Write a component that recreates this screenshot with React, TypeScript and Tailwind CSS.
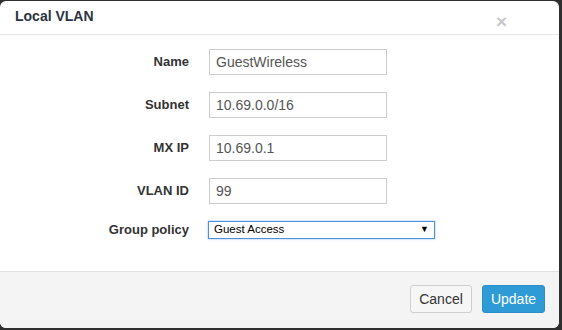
import React from "react";

const font = { fontFamily: '"Liberation Sans", Arial, sans-serif' };

function Row({ label, value }: { label: string; value: string }) {
  return (
    <div className="flex items-center h-[26px]">
      <div className="w-[189px] text-right text-[13px] font-bold text-[#333]">{label}</div>
      <div className="ml-[20px] w-[178px] h-[26px] border border-[#cccccc] bg-white flex items-center px-[6px] text-[14px] text-[#555]">
        {value}
      </div>
    </div>
  );
}

export default function App() {
  return (
    <div className="w-[562px] h-[330px] bg-[#2f2f2f] overflow-hidden" style={font}>
      <div className="mt-px w-[559px] h-[327px] bg-white rounded-[6px] overflow-hidden flex flex-col">
        <div className="h-[34px] border-b border-[#e5e5e5] flex items-center justify-between pl-[15px] pr-[52px]">
          <div className="text-[14px] font-bold text-[#2b3440] -mt-[2px]">Local VLAN</div>
          <div className="text-[19px] font-bold text-[#c8c8c8] leading-none mt-[8px]">×</div>
        </div>
        <div className="flex-1 flex flex-col gap-[17px] pt-[14px]">
          <Row label="Name" value="GuestWireless" />
          <Row label="Subnet" value="10.69.0.0/16" />
          <Row label="MX IP" value="10.69.0.1" />
          <Row label="VLAN ID" value="99" />
          <div className="flex items-center h-[18px]">
            <div className="w-[189px] text-right text-[13px] font-bold text-[#333]">Group policy</div>
            <div className="ml-[19px] w-[227px] h-[18px] border border-[#4d90db] bg-white flex items-center justify-between px-[5px] text-[11.5px] text-black shadow-[0_0_2px_rgba(77,144,219,0.6)]">
              <span>Guest Access</span>
              <span className="text-[9px]">▼</span>
            </div>
          </div>
        </div>
        <div className="h-[57px] border-t border-[#e0e0e0] bg-[#f4f4f4] flex items-center justify-end gap-[10px] pr-[14px] pb-[2px]">
          <div className="w-[62px] h-[28px] rounded-[3px] border border-[#cfcfcf] bg-[#f6f6f6] flex items-center justify-center text-[14px] text-[#333]">
            Cancel
          </div>
          <div className="w-[63px] h-[28px] rounded-[3px] border border-[#2a8fc8] bg-[#2f9bd6] flex items-center justify-center text-[14px] text-white">
            Update
          </div>
        </div>
      </div>
    </div>
  );
}
